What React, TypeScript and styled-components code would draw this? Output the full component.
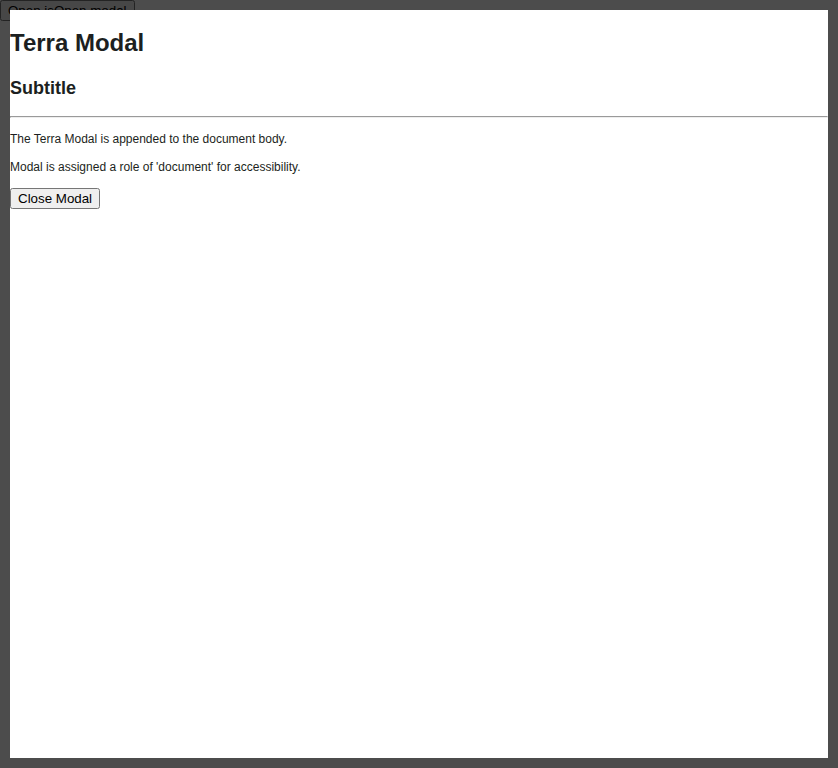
import React from "react";
import styled, { createGlobalStyle } from "styled-components";

const Global = createGlobalStyle`
  html, body { margin: 0; padding: 0; background: #fff; }
  body { font-family: "Liberation Sans", Arial, sans-serif; }
`;

const OpenButton = styled.button`
  font-family: "Liberation Sans", Arial, sans-serif;
  font-size: 13.333px;
  margin: 0;
`;

const Overlay = styled.div`
  position: fixed;
  inset: 0;
  background: rgba(0, 0, 0, 0.7);
`;

const Modal = styled.div`
  position: fixed;
  top: 10px;
  left: 10px;
  right: 10px;
  bottom: 10px;
  background: #fff;
  color: #1c1f21;
  font-family: "Liberation Sans", Arial, sans-serif;
  line-height: 1.4285714;
  overflow: auto;
`;

const Title = styled.h1`
  font-size: 24px;
  font-weight: 700;
  margin: 16px 0;
`;

const Subtitle = styled.h2`
  font-size: 18px;
  font-weight: 700;
  margin: 15px 0 14px;
`;

const Divider = styled.hr`
  margin: 0;
`;

const Text = styled.p<{ $lead?: boolean }>`
  font-size: 12px;
  margin: ${(p) => (p.$lead ? "13px" : "12px")} 0 12px;
  line-height: 16px;
`;

const CloseButton = styled.button`
  font-family: "Liberation Sans", Arial, sans-serif;
  font-size: 13.333px;
  margin: 0;
`;

export default function App() {
  return (
    <>
      <Global />
      <OpenButton>Open isOpen modal</OpenButton>
      <Overlay />
      <Modal role="document">
        <Title>Terra Modal</Title>
        <Subtitle>Subtitle</Subtitle>
        <Divider />
        <Text $lead>The Terra Modal is appended to the document body.</Text>
        <Text>Modal is assigned a role of 'document' for accessibility.</Text>
        <CloseButton>Close Modal</CloseButton>
      </Modal>
    </>
  );
}
